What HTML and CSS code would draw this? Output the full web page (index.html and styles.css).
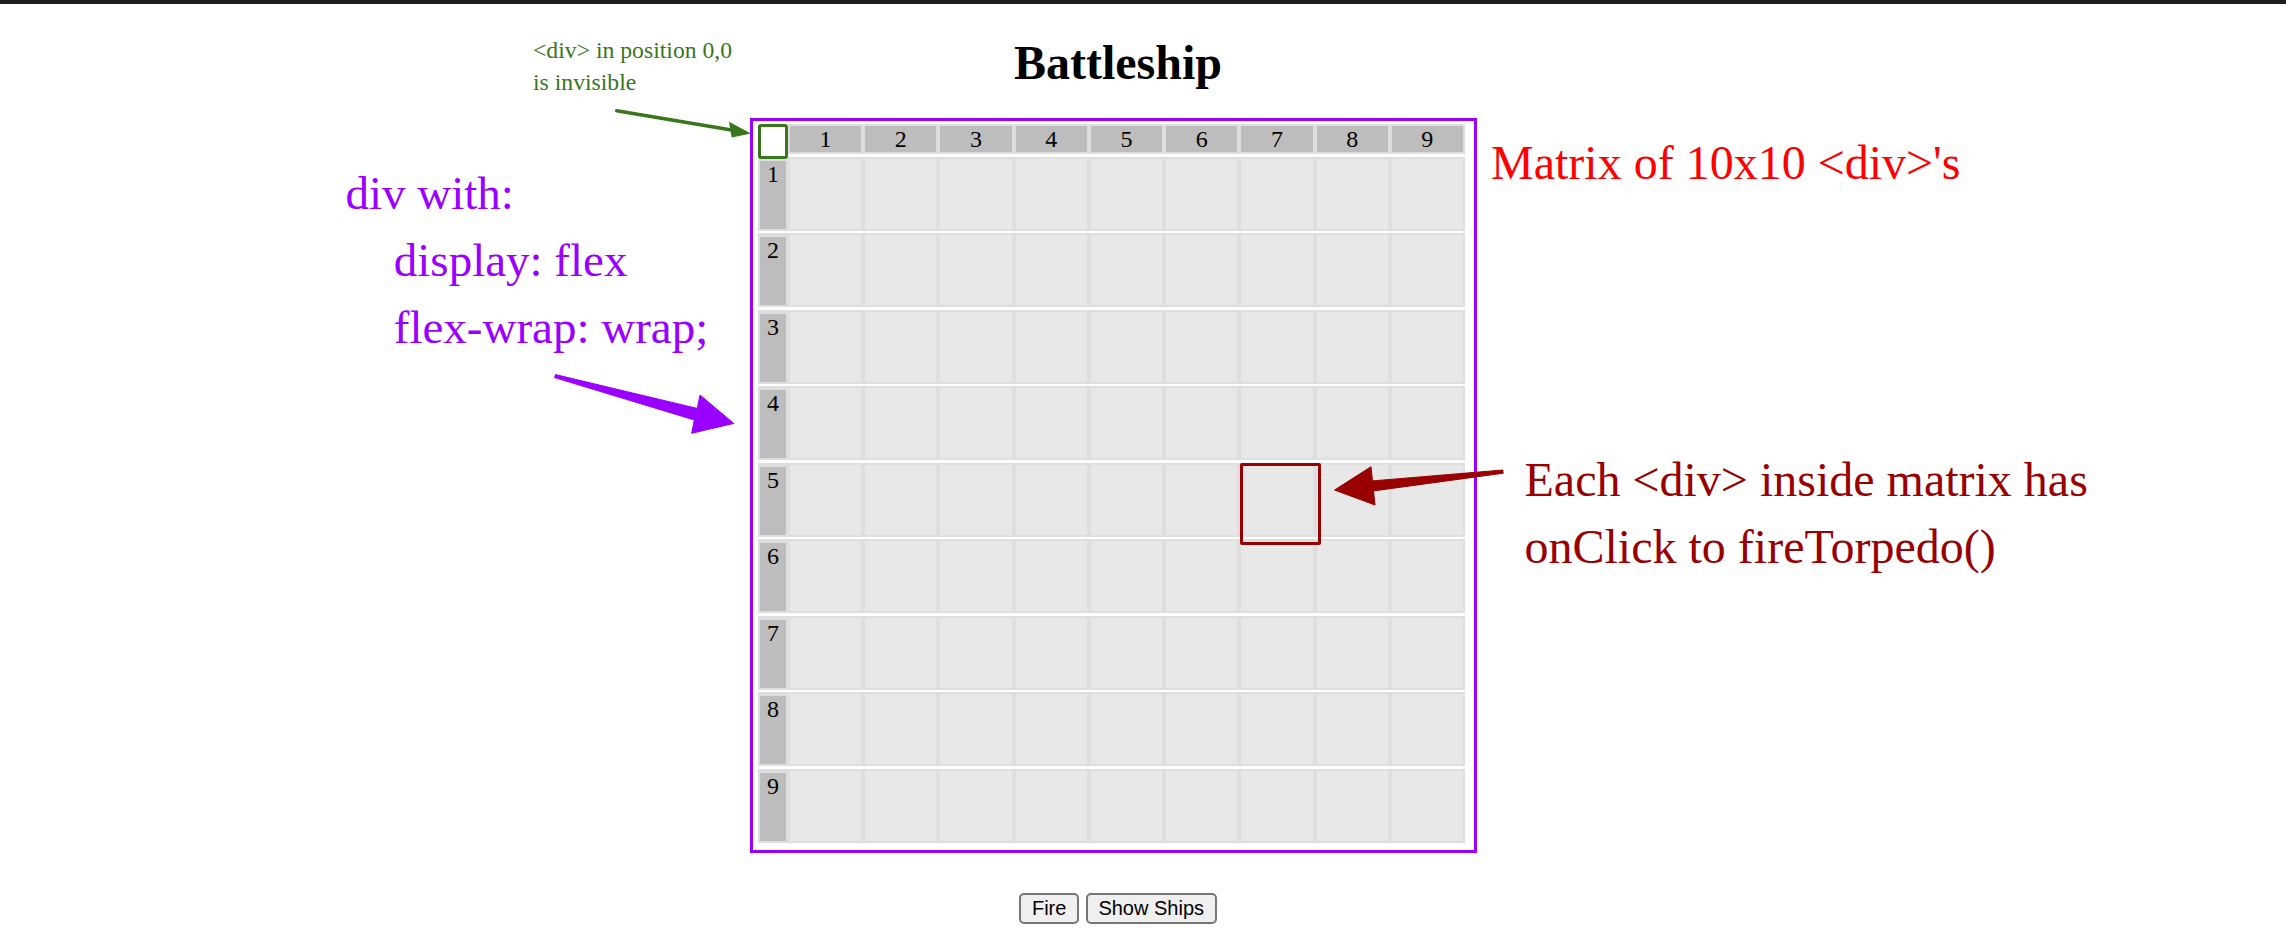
FILE: index.html
```html
<!DOCTYPE html>
<html lang="en">
<head>
<meta charset="utf-8">
<title>Battleship</title>
<link rel="stylesheet" href="styles.css">
</head>
<body>
<div class="topbar"></div>
<main class="page">
  <h1 class="title">Battleship</h1>
  <div class="board">
    <div class="row head">
      <div class="corner"></div>
      <div class="cell">1</div><div class="cell">2</div><div class="cell">3</div><div class="cell">4</div><div class="cell">5</div><div class="cell">6</div><div class="cell">7</div><div class="cell">8</div><div class="cell">9</div>
    </div>
    <div class="row"><div class="lab">1</div><div class="cell"></div><div class="cell"></div><div class="cell"></div><div class="cell"></div><div class="cell"></div><div class="cell"></div><div class="cell"></div><div class="cell"></div><div class="cell"></div></div>
    <div class="row"><div class="lab">2</div><div class="cell"></div><div class="cell"></div><div class="cell"></div><div class="cell"></div><div class="cell"></div><div class="cell"></div><div class="cell"></div><div class="cell"></div><div class="cell"></div></div>
    <div class="row"><div class="lab">3</div><div class="cell"></div><div class="cell"></div><div class="cell"></div><div class="cell"></div><div class="cell"></div><div class="cell"></div><div class="cell"></div><div class="cell"></div><div class="cell"></div></div>
    <div class="row"><div class="lab">4</div><div class="cell"></div><div class="cell"></div><div class="cell"></div><div class="cell"></div><div class="cell"></div><div class="cell"></div><div class="cell"></div><div class="cell"></div><div class="cell"></div></div>
    <div class="row"><div class="lab">5</div><div class="cell"></div><div class="cell"></div><div class="cell"></div><div class="cell"></div><div class="cell"></div><div class="cell"></div><div class="cell"></div><div class="cell"></div><div class="cell"></div></div>
    <div class="row"><div class="lab">6</div><div class="cell"></div><div class="cell"></div><div class="cell"></div><div class="cell"></div><div class="cell"></div><div class="cell"></div><div class="cell"></div><div class="cell"></div><div class="cell"></div></div>
    <div class="row"><div class="lab">7</div><div class="cell"></div><div class="cell"></div><div class="cell"></div><div class="cell"></div><div class="cell"></div><div class="cell"></div><div class="cell"></div><div class="cell"></div><div class="cell"></div></div>
    <div class="row"><div class="lab">8</div><div class="cell"></div><div class="cell"></div><div class="cell"></div><div class="cell"></div><div class="cell"></div><div class="cell"></div><div class="cell"></div><div class="cell"></div><div class="cell"></div></div>
    <div class="row"><div class="lab">9</div><div class="cell"></div><div class="cell"></div><div class="cell"></div><div class="cell"></div><div class="cell"></div><div class="cell"></div><div class="cell"></div><div class="cell"></div><div class="cell"></div></div>
  </div>
  <div class="actions">
    <button class="btn" type="button">Fire</button>
    <button class="btn" type="button">Show Ships</button>
  </div>
</main>

<div class="note note-green">&lt;div&gt; in position 0,0<br>is invisible</div>
<div class="note note-purple">
  <div>div with:</div>
  <div class="indent">display: flex</div>
  <div class="indent">flex-wrap: wrap;</div>
</div>
<div class="note note-matrix">Matrix of 10x10 &lt;div&gt;'s</div>
<div class="note note-each">Each &lt;div&gt; inside matrix has<br>onClick to fireTorpedo()</div>

<div class="mark mark-green"></div>
<div class="mark mark-red"></div>

<svg class="arrows" width="2286" height="944" viewBox="0 0 2286 944" aria-hidden="true">
  <line x1="616.7" y1="110.7" x2="733" y2="130.3" stroke="#38761d" stroke-width="3.5" stroke-linecap="round"/>
  <polygon points="751,133.6 729,121.7 731.7,137.6" fill="#38761d"/>
  <polygon points="555.4,374.6 697.3,408.4 700,395 733.8,423.4 691.7,433.3 694.3,420 554.6,377.6" fill="#9900ff" stroke="#9900ff" stroke-width="1" stroke-linejoin="round"/>
  <polygon points="1502.8,470 1372.5,480.9 1371,466.7 1334.5,490 1375,505 1373.5,490.9 1503.2,473.2" fill="#990000" stroke="#990000" stroke-width="1" stroke-linejoin="round"/>
</svg>
</body>
</html>
```
FILE: styles.css
```css
* {
  box-sizing: border-box;
}

html, body {
  margin: 0;
  padding: 0;
  background: #ffffff;
}

body {
  position: relative;
  width: 2286px;
  height: 944px;
  overflow: hidden;
  font-family: "Liberation Serif", "Times New Roman", serif;
  color: #000;
}

.topbar {
  height: 4px;
  background: #1e1e1e;
}

.page {
  display: flex;
  flex-direction: column;
  align-items: center;
  padding-right: 50px;
}

.title {
  margin: 31px 0 28px;
  font-size: 48px;
  line-height: 55px;
  font-weight: bold;
}

.board {
  width: 727px;
  margin-right: 9px;
  border: 3px solid #9900ff;
  padding: 3px 9px 7px 5px;
  display: flex;
  flex-direction: column;
}

.row {
  display: flex;
  height: 74px;
  margin-top: 2.5px;
}

.row.head {
  height: 30px;
  margin-top: 0;
}

.corner {
  flex: none;
  width: 30px;
  visibility: hidden;
}

.cell {
  flex: 1 1 0;
  border: 2px solid #dedede;
  background: #e8e8e8;
}

.head .cell {
  background: #bdbdbd;
  text-align: center;
  font-size: 24px;
  line-height: 26px;
}

.lab {
  flex: none;
  width: 30px;
  border: 2px solid #dedede;
  border-top-width: 4px;
  background: #bdbdbd;
  text-align: center;
  font-size: 24px;
  line-height: 26px;
}

.actions {
  display: flex;
  gap: 7px;
  margin-top: 40.5px;
}

.btn {
  font-family: "Liberation Sans", Arial, sans-serif;
  font-size: 20px;
  line-height: 23px;
  padding: 2px 10.5px 1.5px;
  border: 2px solid #767676;
  border-radius: 5px;
  background: #efefef;
  color: #000;
}

.note {
  position: absolute;
  white-space: nowrap;
}

.note-green {
  left: 533px;
  top: 34px;
  font-size: 23.7px;
  line-height: 32.4px;
  color: #38761d;
}

.note-purple {
  left: 345.5px;
  top: 160px;
  font-size: 47px;
  line-height: 67px;
  color: #9900ff;
}

.note-purple .indent {
  padding-left: 48.3px;
}

.note-matrix {
  left: 1491px;
  top: 134.6px;
  font-size: 48px;
  line-height: 55px;
  color: #ff0000;
}

.note-each {
  left: 1524.5px;
  top: 446px;
  font-size: 48px;
  line-height: 67px;
  color: #990000;
}

.mark {
  position: absolute;
  border-radius: 3px;
}

.mark-green {
  left: 758px;
  top: 124px;
  width: 30px;
  height: 35px;
  border: 3px solid #38761d;
}

.mark-red {
  left: 1240px;
  top: 463px;
  width: 81px;
  height: 82px;
  border: 3px solid #990000;
  border-radius: 2px;
}

.arrows {
  position: absolute;
  left: 0;
  top: 0;
  pointer-events: none;
}
```
